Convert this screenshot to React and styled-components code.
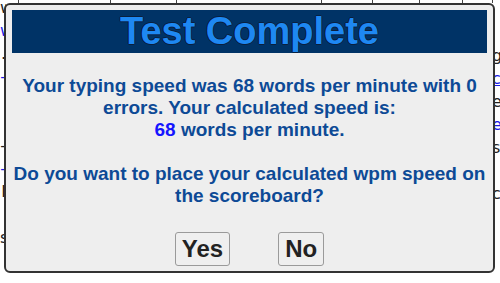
import styled, { createGlobalStyle } from "styled-components";

const GlobalStyle = createGlobalStyle`
  html, body {
    margin: 0;
    padding: 0;
    background: #ffffff;
    overflow: hidden;
  }
`;

const Page = styled.div`
  width: 500px;
  height: 283px;
  overflow: hidden;
  font-family: "DejaVu Sans", sans-serif;
  font-size: 16px;
  color: #222;
`;

const TopRow = styled.div`
  display: flex;
  height: 3px;
`;

const TopCell = styled.div`
  width: ${(p) => p.$w}px;
  flex: none;
  border-right: 1px solid #444;
`;

const Columns = styled.div`
  display: flex;
  margin-top: -7px;
`;

const SideCol = styled.div`
  width: ${(p) => p.$w}px;
  flex: none;
  overflow: hidden;
  white-space: nowrap;
  text-align: ${(p) => p.$align};
  padding-top: ${(p) => p.$top || 0}px;
  line-height: 23px;
`;

const Spacer = styled.div`
  flex: 1;
`;

const Frag = styled.div`
  height: 23px;
  color: ${(p) => (p.$link ? "#1a1ae6" : "#222")};
  text-decoration: ${(p) => (p.$under ? "underline" : "none")};
`;

const Dialog = styled.div`
  position: fixed;
  top: 3px;
  left: 4px;
  width: 491px;
  height: 270px;
  box-sizing: border-box;
  border: 2px solid #333;
  border-radius: 6px;
  background: #eeeeee;
  padding: 5px 6px;
  display: flex;
  flex-direction: column;
  font-family: "Liberation Sans", Arial, sans-serif;
`;

const Header = styled.div`
  background: #003366;
  height: 43px;
  display: flex;
  align-items: center;
  justify-content: center;
`;

const Title = styled.h1`
  margin: 0;
  font-size: 38px;
  font-weight: bold;
  color: #1e88f2;
  line-height: 43px;
  text-shadow: 1px 0 0 #0a1f3d, -1px 0 0 #0a1f3d, 0 1px 0 #0a1f3d,
    0 -1px 0 #0a1f3d;
`;

const Message = styled.p`
  margin: 22px 0 0;
  font-size: 19px;
  font-weight: bold;
  line-height: 22px;
  color: #0d4a96;
  text-align: center;
`;

const Speed = styled.span`
  color: #1515ff;
`;

const ButtonRow = styled.div`
  display: flex;
  justify-content: center;
  gap: 48px;
  margin-top: 25px;
`;

const Button = styled.button`
  font-family: "Liberation Sans", Arial, sans-serif;
  font-size: 24px;
  font-weight: bold;
  color: #222;
  background: #efefef;
  border: 1px solid #9a9a9a;
  border-radius: 3px;
  padding: 2px 6px;
  line-height: normal;
`;

const leftLines = [
  { t: "w" },
  { t: "w", link: true },
  { t: "." },
  { t: "-", link: true },
  { t: "" },
  { t: "" },
  { t: "-" },
  { t: "-", link: true },
  { t: "I" },
  { t: "" },
  { t: "s" },
];

const rightLines = [
  { t: "" },
  { t: "" },
  { t: "g" },
  { t: "c", link: true, under: true },
  { t: "e" },
  { t: "e", link: true },
  { t: "s" },
  { t: "" },
  { t: "c" },
];

const topCells = [18, 91, 65, 144, 50, 46, 42, 29];

export default function App() {
  return (
    <>
      <GlobalStyle />
      <Page>
        <TopRow>
          {topCells.map((w, i) => (
            <TopCell key={i} $w={w} />
          ))}
        </TopRow>
        <Columns>
          <SideCol $w={6} $align="right">
            {leftLines.map((l, i) => (
              <Frag key={i} $link={l.link} $under={l.under}>
                {l.t || "\u00a0"}
              </Frag>
            ))}
          </SideCol>
          <Spacer />
          <SideCol $w={8} $align="left" $top={2}>
            {rightLines.map((l, i) => (
              <Frag key={i} $link={l.link} $under={l.under}>
                {l.t || "\u00a0"}
              </Frag>
            ))}
          </SideCol>
        </Columns>
      </Page>

      <Dialog>
        <Header>
          <Title>Test Complete</Title>
        </Header>
        <Message>
          Your typing speed was 68 words per minute with 0 errors. Your
          calculated speed is:
          <br />
          <Speed>68</Speed> words per minute.
          <br />
          <br />
          Do you want to place your calculated wpm speed on the scoreboard?
        </Message>
        <ButtonRow>
          <Button>Yes</Button>
          <Button>No</Button>
        </ButtonRow>
      </Dialog>
    </>
  );
}
